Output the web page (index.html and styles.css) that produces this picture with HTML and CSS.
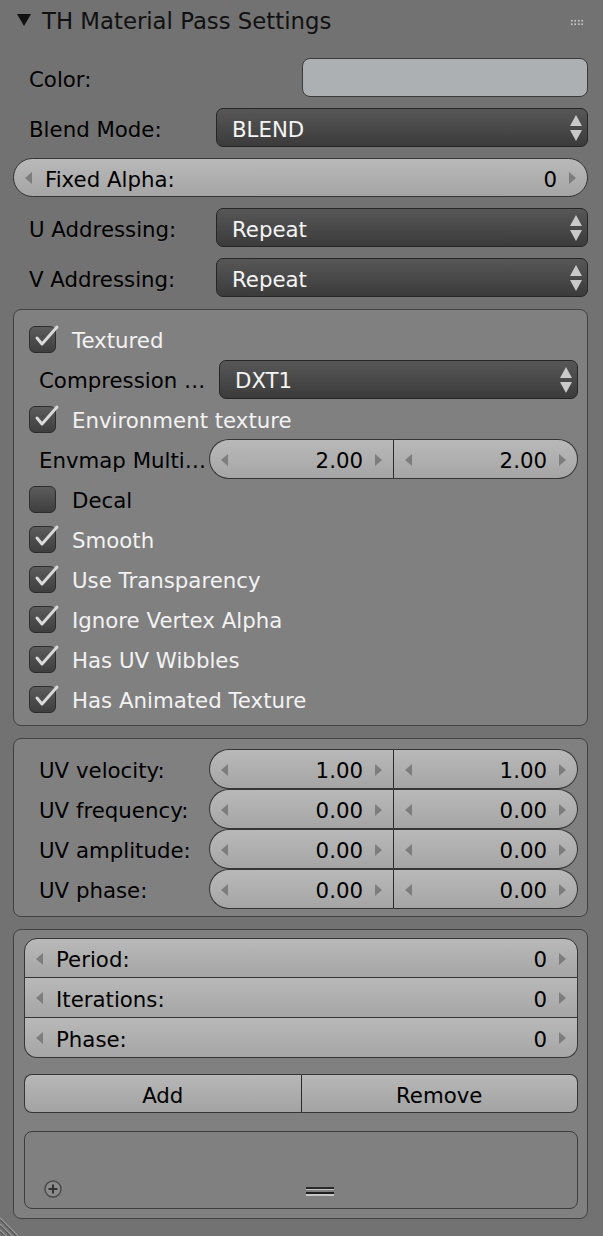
FILE: index.html
```html
<!DOCTYPE html>
<html>
<head>
<meta charset="utf-8">
<title>TH Material Pass Settings</title>
<link rel="stylesheet" href="styles.css">
</head>
<body>
<div class="panel">
  <div class="header">
    <span class="tri"></span>
    <span class="title">TH Material Pass Settings</span>
    <span class="grip"></span>
  </div>

  <div class="content">
    <div class="row">
      <div class="label lbl-color">Color:</div>
      <div class="swatch"></div>
    </div>
    <div class="row">
      <div class="label lbl-top">Blend Mode:</div>
      <div class="menu"><span class="mtext">BLEND</span><span class="updown"></span></div>
    </div>
    <div class="row">
      <div class="num pill grow">
        <span class="larr"></span><span class="nlabel">Fixed Alpha:</span><span class="nval">0</span><span class="rarr"></span>
      </div>
    </div>
    <div class="row">
      <div class="label lbl-top">U Addressing:</div>
      <div class="menu"><span class="mtext">Repeat</span><span class="updown"></span></div>
    </div>
    <div class="row">
      <div class="label lbl-top">V Addressing:</div>
      <div class="menu"><span class="mtext">Repeat</span><span class="updown"></span></div>
    </div>

    <div class="box box1">
      <div class="brow"><span class="cb on"><svg viewBox="0 0 30 30" class="tick"><polyline points="8,13 13,19 28,2"/></svg></span><span class="clabel on">Textured</span></div>
      <div class="brow">
        <div class="label lbl-comp">Compression …</div>
        <div class="menu"><span class="mtext">DXT1</span><span class="updown"></span></div>
      </div>
      <div class="brow"><span class="cb on"><svg viewBox="0 0 30 30" class="tick"><polyline points="8,13 13,19 28,2"/></svg></span><span class="clabel on">Environment texture</span></div>
      <div class="brow">
        <div class="label lbl-env">Envmap Multi…</div>
        <div class="pair">
          <div class="num lhalf"><span class="larr"></span><span class="nval">2.00</span><span class="rarr"></span></div>
          <div class="num rhalf"><span class="larr"></span><span class="nval">2.00</span><span class="rarr"></span></div>
        </div>
      </div>
      <div class="brow"><span class="cb"></span><span class="clabel">Decal</span></div>
      <div class="brow"><span class="cb on"><svg viewBox="0 0 30 30" class="tick"><polyline points="8,13 13,19 28,2"/></svg></span><span class="clabel on">Smooth</span></div>
      <div class="brow"><span class="cb on"><svg viewBox="0 0 30 30" class="tick"><polyline points="8,13 13,19 28,2"/></svg></span><span class="clabel on">Use Transparency</span></div>
      <div class="brow"><span class="cb on"><svg viewBox="0 0 30 30" class="tick"><polyline points="8,13 13,19 28,2"/></svg></span><span class="clabel on">Ignore Vertex Alpha</span></div>
      <div class="brow"><span class="cb on"><svg viewBox="0 0 30 30" class="tick"><polyline points="8,13 13,19 28,2"/></svg></span><span class="clabel on">Has UV Wibbles</span></div>
      <div class="brow"><span class="cb on"><svg viewBox="0 0 30 30" class="tick"><polyline points="8,13 13,19 28,2"/></svg></span><span class="clabel on">Has Animated Texture</span></div>
    </div>

    <div class="box box2">
      <div class="brow">
        <div class="label lbl-env">UV velocity:</div>
        <div class="pair">
          <div class="num lhalf"><span class="larr"></span><span class="nval">1.00</span><span class="rarr"></span></div>
          <div class="num rhalf"><span class="larr"></span><span class="nval">1.00</span><span class="rarr"></span></div>
        </div>
      </div>
      <div class="brow">
        <div class="label lbl-env">UV frequency:</div>
        <div class="pair">
          <div class="num lhalf"><span class="larr"></span><span class="nval">0.00</span><span class="rarr"></span></div>
          <div class="num rhalf"><span class="larr"></span><span class="nval">0.00</span><span class="rarr"></span></div>
        </div>
      </div>
      <div class="brow">
        <div class="label lbl-env">UV amplitude:</div>
        <div class="pair">
          <div class="num lhalf"><span class="larr"></span><span class="nval">0.00</span><span class="rarr"></span></div>
          <div class="num rhalf"><span class="larr"></span><span class="nval">0.00</span><span class="rarr"></span></div>
        </div>
      </div>
      <div class="brow">
        <div class="label lbl-env">UV phase:</div>
        <div class="pair">
          <div class="num lhalf"><span class="larr"></span><span class="nval">0.00</span><span class="rarr"></span></div>
          <div class="num rhalf"><span class="larr"></span><span class="nval">0.00</span><span class="rarr"></span></div>
        </div>
      </div>
    </div>

    <div class="box box3">
      <div class="col">
        <div class="num crow first"><span class="larr"></span><span class="nlabel">Period:</span><span class="nval">0</span><span class="rarr"></span></div>
        <div class="num crow"><span class="larr"></span><span class="nlabel">Iterations:</span><span class="nval">0</span><span class="rarr"></span></div>
        <div class="num crow last"><span class="larr"></span><span class="nlabel">Phase:</span><span class="nval">0</span><span class="rarr"></span></div>
      </div>
      <div class="btns">
        <div class="btn bl"><span class="btext">Add</span></div>
        <div class="btn br"><span class="btext">Remove</span></div>
      </div>
      <div class="list">
        <svg class="plus" viewBox="0 0 20 20"><circle cx="10" cy="10" r="8" fill="#8c8c8c" stroke="#4a4a4a" stroke-width="1.5"/><path d="M10 5.5v9M5.5 10h9" stroke="#333" stroke-width="2"/></svg>
        <span class="handle"></span>
      </div>
    </div>
  </div>
  <svg class="corner" viewBox="0 0 24 24"><path d="M0 6L18 24M0 12L12 24M0 18L6 24" stroke="#9a9a9a" stroke-width="1.2"/><path d="M0 7.5L16.5 24M0 13.5L10.5 24M0 19.5L4.5 24" stroke="#444" stroke-width="1"/></svg>
</div>
</body>
</html>
```
FILE: styles.css
```css
* { box-sizing: border-box; }
html, body { margin: 0; padding: 0; }
body {
  width: 603px;
  height: 1236px;
  overflow: hidden;
  background: #727272;
  font-family: "DejaVu Sans", "Liberation Sans", sans-serif;
  font-size: 21.3px;
  color: #000;
}
.panel {
  position: relative;
  width: 603px;
  height: 1236px;
}
.header {
  height: 42px;
  display: flex;
  align-items: center;
  padding: 0 0 0 17px;
}
.tri {
  width: 0; height: 0;
  border-left: 7px solid transparent;
  border-right: 7px solid transparent;
  border-top: 12px solid #111;
  margin-right: 11px;
  margin-top: -2px;
}
.title {
  font-size: 22.8px;
  color: #111;
  flex: 1;
  white-space: nowrap;
}
.grip {
  width: 14px;
  height: 7px;
  margin-right: 19px;
  margin-top: 3px;
  background-image: radial-gradient(circle, #c4c4c4 0.9px, transparent 1.1px);
  background-size: 3.5px 3.5px;
}
.content {
  padding: 16px 15px 0 13px;
  display: flex;
  flex-direction: column;
}
.row {
  height: 39px;
  display: flex;
  align-items: center;
  margin-bottom: 11px;
}
.label, .clabel, .nlabel, .nval, .mtext, .btext {
  padding-top: 3px;
  white-space: nowrap;
}
.label {
  padding-left: 16px;
  flex: none;
  text-shadow: 0 1px 0 rgba(255,255,255,0.08);
}
.lbl-color { width: 289px; }
.lbl-top { width: 203px; }
.lbl-comp { width: 195px; padding-left: 15px; }
.lbl-env { width: 185px; padding-left: 15px; }
.swatch {
  flex: 1;
  height: 39px;
  background: #adb0b3;
  border: 1.5px solid #3a3a3a;
  border-radius: 8px;
}
.menu {
  flex: 1;
  height: 39px;
  border: 1px solid #262626;
  border-radius: 7px;
  background: linear-gradient(#575757, #3b3b3b);
  color: #f4f4f4;
  padding-left: 15px;
  display: flex;
  align-items: center;
  position: relative;
}
.updown {
  position: absolute;
  right: 5px;
  top: 6px;
  width: 12px;
  height: 26px;
}
.updown::before, .updown::after {
  content: "";
  position: absolute;
  left: 0;
  border-left: 6px solid transparent;
  border-right: 6px solid transparent;
}
.updown::before { top: 0; border-bottom: 11px solid #c9c9c9; }
.updown::after { bottom: 0; border-top: 11px solid #c9c9c9; }

.num {
  height: 39px;
  display: flex;
  align-items: center;
  padding: 0 11px;
  background: linear-gradient(#b9b9b9, #a5a5a5);
  border: 1.5px solid #353535;
}
.grow { flex: 1; }
.pill { border-radius: 20px; }
.larr, .rarr {
  width: 0; height: 0;
  border-top: 6px solid transparent;
  border-bottom: 6px solid transparent;
  flex: none;
  margin-top: 1px;
}
.larr { border-right: 7px solid #7d7d7d; }
.rarr { border-left: 7px solid #7d7d7d; }
.nlabel { margin-left: 13px; flex: 1; }
.nval { margin-right: 12px; text-align: right; }
.num .larr + .nval { flex: 1; }

.box {
  background: #808080;
  border: 1px solid #424242;
  border-radius: 8px;
  padding: 9px 9px 6px 10px;
  margin-bottom: 12px;
}
.box1 { margin-top: 1px; }
.brow {
  height: 40px;
  display: flex;
  align-items: center;
}
.cb {
  width: 27px;
  height: 27px;
  margin-left: 5px;
  margin-right: 16px;
  border-radius: 6px;
  border: 1px solid #2d2d2d;
  background: linear-gradient(#5c5c5c, #3e3e3e);
  position: relative;
  flex: none;
}
.tick {
  position: absolute;
  left: -1px;
  top: -2px;
  width: 30px;
  height: 30px;
  overflow: visible;
}
.tick polyline {
  fill: none;
  stroke: #d9d9d9;
  stroke-width: 3;
  stroke-linecap: round;
  stroke-linejoin: round;
}
.clabel.on { color: #f2f2f2; }
.pair {
  flex: 1;
  display: flex;
  height: 40px;
}
.pair .num { height: 40px; flex: 1; }
.lhalf { border-radius: 20px 0 0 20px; border-right: 1px solid #2a2a2a; }
.rhalf { border-radius: 0 20px 20px 0; border-left: none; }

.box2 { padding-top: 10px; padding-bottom: 7px; }
.box2 .pair .num { border-top-width: 1px; border-bottom-width: 1px; }

.box3 { padding: 8px 9px 9px 10px; margin-bottom: 0; }
.col { display: flex; flex-direction: column; }
.crow { height: 40px; border-top: none; }
.crow.first { border-top: 1.5px solid #353535; border-radius: 13px 13px 0 0; }
.crow.last { border-radius: 0 0 13px 13px; }
.btns {
  display: flex;
  margin-top: 16px;
  height: 39px;
}
.btn {
  flex: 1;
  height: 39px;
  display: flex;
  align-items: center;
  justify-content: center;
  background: linear-gradient(#b7b7b7, #a3a3a3);
  border: 1.5px solid #353535;
}
.bl { border-radius: 8px 0 0 8px; border-right: 1px solid #2a2a2a; }
.br { border-radius: 0 8px 8px 0; border-left: none; }
.list {
  margin-top: 18px;
  height: 78px;
  border: 1.5px solid #3d3d3d;
  border-radius: 8px;
  position: relative;
  display: flex;
  align-items: flex-end;
  padding: 0 0 9px 18px;
}
.plus { width: 20px; height: 20px; }
.handle {
  position: absolute;
  left: 281px;
  bottom: 11px;
  width: 28px;
  height: 10px;
  background: linear-gradient(#2a2a2a 0 2px, #bdbdbd 2px 3px, transparent 3px 5px, #1f1f1f 5px 7px, #c6c6c6 7px 9px, transparent 9px);
}
.corner {
  position: absolute;
  left: 0;
  bottom: 0;
  width: 24px;
  height: 24px;
}
```
